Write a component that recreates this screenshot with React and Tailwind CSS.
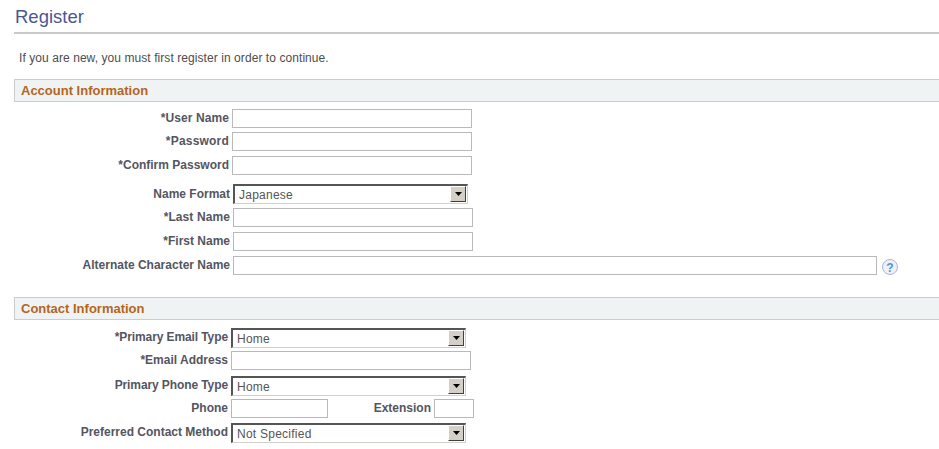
import React from "react";

function Field({ className = "" }) {
  return <input type="text" className={`h-[19px] border border-[#b9b9b9] bg-white ${className}`} />;
}

function Dropdown({ value, className = "" }) {
  return (
    <div className={`flex h-[20px] items-stretch border-t-2 border-l-2 border-t-[#555555] border-l-[#555555] border-r border-b border-r-[#d4d0c8] border-b-[#d4d0c8] bg-white ${className}`}>
      <span className="flex-1 pl-[4px] text-xs leading-[19px] tracking-[0.25px] text-[#555555]">{value}</span>
      <span className="m-px mt-0 flex w-[16px] items-center justify-center border border-t-white border-l-white border-r-[#404040] border-b-[#404040] bg-[#d4d0c8]">
        <svg width="7" height="4" viewBox="0 0 7 4"><path d="M0 0h7L3.5 4z" fill="#000" /></svg>
      </span>
    </div>
  );
}

function Row({ label, labelClass, className = "", children }) {
  return (
    <div className={`flex items-start ${className}`}>
      <label className={`pr-[3px] text-right text-xs font-bold whitespace-nowrap text-[#55555f] ${labelClass}`}>{label}</label>
      {children}
    </div>
  );
}

function SectionBar({ title, className = "" }) {
  return (
    <div className={`h-[23px] border border-r-0 border-[#c9cdd0] bg-[#f0f3f4] pl-[6px] text-[13px] leading-[22px] font-bold text-[#b5651d] ${className}`}>
      {title}
    </div>
  );
}

function HelpIcon() {
  return (
    <svg width="16" height="16" viewBox="0 0 16 16" className="mt-[3px] ml-[5px]">
      <circle cx="8" cy="8" r="7.5" fill="#eef1f9" stroke="#aeb3d6" />
      <text x="8" y="12.5" textAnchor="middle" fontSize="12" fontWeight="700" fontFamily="Liberation Sans" fill="#4f94d8">?</text>
    </svg>
  );
}

export default function App() {
  return (
    <div className="h-[449px] w-[939px] overflow-hidden bg-white pl-[14px] font-['Liberation_Sans',Arial,sans-serif]">
      <h1 className="h-[32px] pl-px text-[18.5px] leading-[33px] font-normal text-[#4a5894]">Register</h1>
      <div className="h-[2px] bg-[#c9c9c9]" />
      <p className="mt-[17px] pl-[5px] text-xs leading-[14px] tracking-[0.07px] text-[#4d4d4d]">If you are new, you must first register in order to continue.</p>
      <SectionBar title="Account Information" className="mt-[14px]" />

      <Row label="*User Name" labelClass="w-[218px] leading-[18px] tracking-[0.1px]" className="mt-[7px]"><Field className="w-[240px]" /></Row>
      <Row label="*Password" labelClass="w-[218px] leading-[18px] tracking-[0.2px]" className="mt-[4px]"><Field className="w-[240px]" /></Row>
      <Row label="*Confirm Password" labelClass="w-[218px] leading-[18px]" className="mt-[5px]"><Field className="w-[240px]" /></Row>

      <Row label="Name Format" labelClass="w-[219px] leading-[21px]" className="mt-[9px]"><Dropdown value="Japanese" className="w-[235px]" /></Row>
      <Row label="*Last Name" labelClass="w-[219px] leading-[18px] tracking-[0.1px]" className="mt-[3px]"><Field className="w-[240px]" /></Row>
      <Row label="*First Name" labelClass="w-[219px] leading-[18px]" className="mt-[5px]"><Field className="w-[240px]" /></Row>
      <Row label="Alternate Character Name" labelClass="w-[219px] leading-[18px]" className="mt-[5px]">
        <Field className="w-[644px]" />
        <HelpIcon />
      </Row>

      <SectionBar title="Contact Information" className="mt-[22px]" />

      <Row label="*Primary Email Type" labelClass="w-[217px] leading-[19px] tracking-[-0.1px]" className="mt-[8px]"><Dropdown value="Home" className="w-[235px]" /></Row>
      <Row label="*Email Address" labelClass="w-[217px] leading-[18px]" className="mt-[3px]"><Field className="w-[240px]" /></Row>
      <Row label="Primary Phone Type" labelClass="w-[217px] leading-[19px] tracking-[-0.1px]" className="mt-[6px]"><Dropdown value="Home" className="w-[235px]" /></Row>
      <Row label="Phone" labelClass="w-[217px] leading-[18px]" className="mt-[3px]">
        <Field className="w-[97px]" />
        <span className="w-[106px] pr-[3px] text-right text-xs leading-[18px] font-bold text-[#55555f]">Extension</span>
        <Field className="w-[40px]" />
      </Row>
      <Row label="Preferred Contact Method" labelClass="w-[217px] leading-[19px]" className="mt-[5px]"><Dropdown value="Not Specified" className="w-[235px]" /></Row>
    </div>
  );
}
